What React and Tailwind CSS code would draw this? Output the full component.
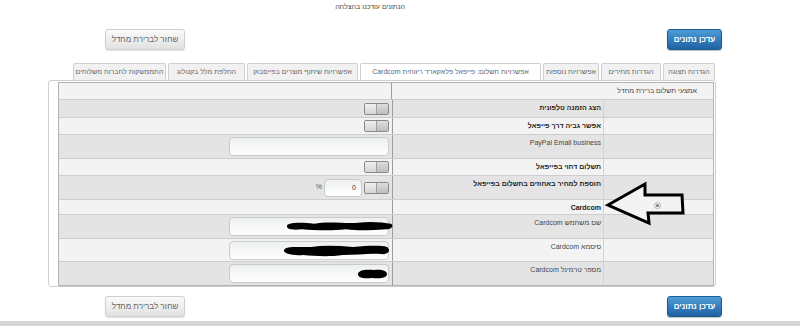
import React from 'react';

const tabs = [
  { label: 'הגדרות תצוגה', w: 'w-[52px]' },
  { label: 'הגדרות מחירים', w: 'w-[60px]' },
  { label: 'אפשרויות נוספות', w: 'w-[56px]' },
  { label: 'אפשרויות תשלום: פייפאל פלאקארד ריווחית Cardcom', w: 'w-[181px]', active: true },
  { label: 'אפשרויות שיתוף מוצרים בפייסבוק', w: 'w-[111px]' },
  { label: 'החלפת מלל בקטלוג', w: 'w-[77px]' },
  { label: 'התממשקות לחברות משלוחים', w: 'w-[93px]' },
];

const rows = [
  { h: 'h-[16px]', dark: false, head: 'אמצעי תשלום ברירת מחדל' },
  { h: 'h-[18px]', dark: true, label: 'הצג הזמנה טלפונית', bold: true, ctrl: 'toggle' },
  { h: 'h-[17px]', dark: false, label: 'אפשר גביה דרך פייפאל', bold: true, ctrl: 'toggle' },
  { h: 'h-[24px]', dark: true, label: 'PayPal Email business', ctrl: 'input' },
  { h: 'h-[17px]', dark: false, label: 'תשלום דחוי בפייפאל', bold: true, ctrl: 'toggle' },
  { h: 'h-[24px]', dark: true, label: 'תוספת למחיר באחוזים בתשלום בפייפאל', bold: true, ctrl: 'percent' },
  { h: 'h-[15px]', dark: false, label: 'Cardcom', bold: true },
  { h: 'h-[24px]', dark: true, label: 'שם משתמש Cardcom', ctrl: 'input', blob: 1 },
  { h: 'h-[23px]', dark: false, label: 'סיסמא Cardcom', ctrl: 'input', blob: 2 },
  { h: 'h-[24px]', dark: true, label: 'מספר טרמינל Cardcom', ctrl: 'input', blob: 3 },
];

// the black scribbles that hide the cardcom values
const blobs = {
  1: { cls: 'left-[54px] top-[2px] w-[110px] h-[13px]', d: 'M3,7 C2,3 14,2 30,4 C44,1 60,4 74,3 C88,1 100,3 107,4 C110,6 108,10 102,10 C86,11 76,12 62,10 C46,12 30,11 18,10 C8,11 3,10 3,7 Z' },
  2: { cls: 'left-[51px] top-[2px] w-[110px] h-[14px]', d: 'M3,6 C4,2 16,3 30,3 C44,1 58,2 72,3 C86,2 98,1 106,3 C110,6 108,11 100,10 C88,9 76,11 62,11 C48,13 34,12 22,11 C10,12 2,9 3,6 Z' },
  3: { cls: 'left-[126px] top-[3px] w-[32px] h-[12px]', d: 'M2,6 C2,2 10,1 18,2 C26,1 31,3 31,6 C31,10 24,11 16,10 C8,11 2,10 2,6 Z' },
};

const Toggle = () => (
  <div className="flex h-[12px] w-[25px] overflow-hidden rounded-[2px] border border-[#8a8a8a] bg-linear-to-b from-[#e4e4e4] to-[#c2c2c2]">
    <div className="w-[12px] border-l border-[#a0a0a0] bg-linear-to-b from-[#dedede] to-[#bdbdbd]" />
    <div className="flex-1 bg-linear-to-b from-[#f0f0f0] to-[#d4d4d4]" />
  </div>
);

const Field = ({ blob, className = 'w-[160px] h-[19px]', children }) => (
  <div className={`relative rounded-[4px] border border-[#c9cccc] bg-linear-to-b from-[#eef0f0] to-white ${className}`}>
    {children}
    {blob && (
      <svg className={`absolute ${blobs[blob].cls}`} viewBox={blob === 3 ? '0 0 32 12' : '0 0 110 14'} preserveAspectRatio="none">
        <path d={blobs[blob].d} fill="#000" />
      </svg>
    )}
  </div>
);

const Buttons = ({ className }) => (
  <div className={`flex h-[21px] justify-between pr-[78px] pl-[105px] ${className}`}>
    <button className="h-[21px] w-[55px] rounded-[3px] border border-[#1b5a93] bg-linear-to-b from-[#4d9dd9] to-[#1e63a4] text-[8px] font-bold text-white shadow-[0_1px_1px_rgba(0,0,0,0.25)]">
      עדכן נתונים
    </button>
    <button className="h-[21px] w-[80px] rounded-[3px] border border-[#d0d0d0] bg-linear-to-b from-[#fbfbfb] to-[#e1e1e1] text-[8px] text-[#666] shadow-[0_1px_1px_rgba(0,0,0,0.12)]">
      שחזר לברירת מחדל
    </button>
  </div>
);

const Control = ({ row }) => {
  if (row.ctrl === 'toggle') return <Toggle />;
  if (row.ctrl === 'input') return <Field blob={row.blob} />;
  if (row.ctrl === 'percent')
    return (
      <>
        <Toggle />
        <Field className="h-[18px] w-[38px]">
          <span className="block pr-[5px] pt-[3px] text-[7px] leading-[10px] text-[#444]">0</span>
        </Field>
        <span className="text-[7px] text-[#555]">%</span>
      </>
    );
  return null;
};

export default function App() {
  return (
    <div dir="rtl" className="relative h-[332px] w-[800px] overflow-hidden bg-white font-['Liberation_Sans','DejaVu_Sans',Arial,sans-serif] text-[#333]">
      <div className="h-[12px] pt-[2px] pr-[60px] text-center text-[7px] leading-[9px] text-[#444]">הנתונים עודכנו בהצלחה</div>

      <Buttons className="mt-[17px]" />

      <div className="mt-[13px] flex h-[17px] gap-[2px] pr-[85px]">
        {tabs.map((t) => (
          <div
            key={t.label}
            className={`flex h-[17px] items-center justify-center rounded-t-[2px] border border-b-0 border-[#cfcfcf] text-[7px] text-[#666] ${t.w} ${t.active ? 'bg-white' : 'bg-[#f1f1f1]'}`}
          >
            {t.label}
          </div>
        ))}
      </div>

      <div className="mr-[84px] h-[207px] w-[668px] rounded-[3px] border border-[#cfcfcf] bg-white pt-[1px] pr-[1px]">
        <div className="w-[656px] border border-[#b3b3b3]">
          {rows.map((row, i) => (
            <div
              key={i}
              className={`grid grid-cols-[110px_211px_1fr] ${row.h} ${i > 0 ? 'border-t border-[#cdcdcd]' : ''} ${row.dark ? 'bg-[#e4e4e4]' : 'bg-[#f3f3f3]'}`}
            >
              {row.head ? (
                <>
                  <div className="col-span-2 pr-[16px] pt-[3px] text-[7px] leading-[9px] text-[#444]">{row.head}</div>
                  <div className="border-r border-[#9c9c9c]" />
                </>
              ) : (
                <>
                  <div className="border-l border-[#d2d2d2]" />
                  <div
                    className={`border-l border-[#9c9c9c] pr-[2px] pt-[3px] text-[7px] leading-[9px] ${row.bold ? 'font-bold text-[#222]' : 'text-[#444]'}`}
                  >
                    {row.label}
                  </div>
                  <div className="flex items-center gap-[2px] pr-[3px]">
                    <Control row={row} />
                  </div>
                </>
              )}
            </div>
          ))}
        </div>
      </div>

      <Buttons className="mt-[9px]" />

      <div className="mt-[4px] h-[5px] bg-[#d5d5d5]" />

      {/* hand drawn arrow pointing at the Cardcom row, with the radio it covers */}
      <svg className="absolute left-[604px] top-[180px] h-[48px] w-[84px]" viewBox="0 0 84 48">
        <path d="M4,25 L41,4 L41,15 L78,15 L79,33 L44,33 L45,43 Z" fill="#f3f3f3" stroke="#000" strokeWidth="3" strokeLinejoin="miter" />
      </svg>
      <span className="absolute left-[654px] top-[202px] flex h-[7px] w-[7px] items-center justify-center rounded-full border border-[#b0b0b0] bg-[#f6f6f6]">
        <span className="h-[3px] w-[3px] rounded-full bg-[#777]" />
      </span>
    </div>
  );
}
